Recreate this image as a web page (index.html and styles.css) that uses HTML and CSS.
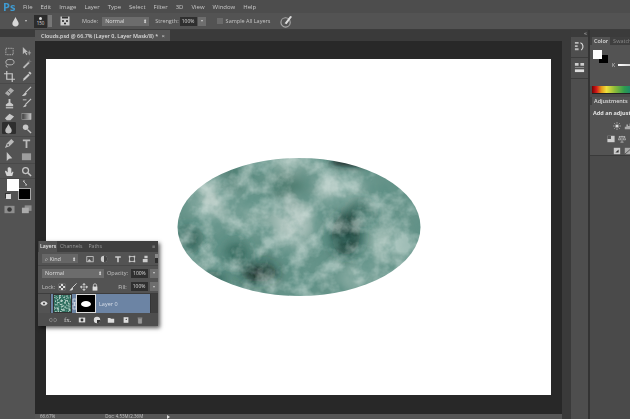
FILE: index.html
```html
<!DOCTYPE html>
<html lang="en">
<head>
<meta charset="utf-8">
<title>Clouds.psd</title>
<link rel="stylesheet" href="styles.css">
</head>
<body>
<div class="app">
  <header class="menubar">
    <span class="logo">Ps</span>
    <nav class="menu"><span>File</span><span>Edit</span><span>Image</span><span>Layer</span><span>Type</span><span>Select</span><span>Filter</span><span>3D</span><span>View</span><span>Window</span><span>Help</span></nav>
  </header>
  <div class="options">
    <svg class="opt-drop" viewBox="0 0 10 12"><path d="M5 1C4 4 1.500 6 1.500 8a3.500 3.500 0 0 0 7 0C8.500 6 6 4 5 1z" fill="#d8d8d8"/></svg>
    <i class="caret opt-caret"></i>
    <div class="brush-size"><b></b><span>150</span></div>
    <div class="brush-arrow"></div>
    <svg class="opt-panel" viewBox="0 0 10 10"><rect x="0.500" y="0.500" width="9" height="9" fill="#ccc"/><rect x="2" y="0.500" width="6" height="2" fill="#333"/><circle cx="3" cy="5" r="1" fill="#222"/><circle cx="7" cy="5" r="1" fill="#222"/><circle cx="5" cy="7.500" r="1" fill="#222"/></svg>
    <span class="lbl lbl-mode">Mode:</span>
    <div class="select sel-mode"><span>Normal</span><em>⬍</em></div>
    <span class="lbl lbl-strength">Strength:</span>
    <div class="field">100%</div>
    <div class="stepper"><i class="caret"></i></div>
    <div class="check"></div>
    <span class="lbl lbl-sample">Sample All Layers</span>
    <svg class="opt-pressure" viewBox="0 0 14 14"><circle cx="6" cy="8" r="5" fill="none" stroke="#aaa" stroke-width="1.200"/><path d="M5 9l6-8 2 1-6 8z" fill="#ddd"/></svg>
  </div>
  <div class="workspace">
    <aside class="tools">
      <div class="tools-head"></div>
      <div class="tool-group">
        <svg viewBox="0 0 12 12"><rect x="2" y="2.500" width="8" height="7" fill="none" stroke="#ccc" stroke-dasharray="1.500 1"/></svg>
        <svg viewBox="0 0 12 12"><path d="M2 1v8l2-2 2 3 1-1-2-2.500h2.500z" fill="#ccc"/><path d="M9 5v5M7 7.500h4" stroke="#ccc" stroke-width=".8"/></svg>
        <svg viewBox="0 0 12 12"><ellipse cx="6.500" cy="4.500" rx="4.500" ry="3" fill="none" stroke="#ccc"/><path d="M3 7c-1 1-1 3 1 3" fill="none" stroke="#ccc"/></svg>
        <svg viewBox="0 0 12 12"><path d="M2 10l6-6 1.500 1.500-6 6z" fill="#ccc"/><path d="M9 1l1 2 2 .5-2 1-1 2-.5-2-2-1 2-.5z" fill="#777"/></svg>
        <svg viewBox="0 0 12 12"><path d="M3 0v9h9M0 3h9v9" fill="none" stroke="#ddd" stroke-width="1.300"/></svg>
        <svg viewBox="0 0 12 12"><path d="M2 11l1-3 5-5 1.500 1.500-5 5z" fill="#ddd"/><path d="M8 2l1.500-1.500 2 2L10 4z" fill="#ddd"/></svg>
      </div>
      <div class="tool-group">
        <svg viewBox="0 0 12 12"><path d="M1 8l6-6 4 3-6 6z" fill="#bbb"/><path d="M4 5l3 3" stroke="#555"/></svg>
        <svg viewBox="0 0 12 12"><path d="M11 1L5 7" stroke="#ddd" stroke-width="1.200"/><path d="M5 6.500L1 11c2 0 5 0 5-3z" fill="#ddd"/></svg>
        <svg viewBox="0 0 12 12"><path d="M5 1h2v4l3 2v2H2V7l3-2z" fill="#ddd"/><rect x="2" y="10" width="8" height="1.300" fill="#ddd"/></svg>
        <svg viewBox="0 0 12 12"><path d="M11 1L5 7" stroke="#ddd" stroke-width="1.200"/><path d="M5 6.500L2 10c2 0 4 0 4-2z" fill="#ddd"/><path d="M2 2h4" stroke="#ddd"/></svg>
        <svg viewBox="0 0 12 12"><path d="M1 8l5-5 5 3-4 4H3z" fill="#ddd"/></svg>
        <svg viewBox="0 0 12 12"><defs><linearGradient id="g"><stop offset="0" stop-color="#333"/><stop offset="1" stop-color="#ddd"/></linearGradient></defs><rect x="1" y="2.500" width="10" height="7" fill="url(#g)" stroke="#bbb" stroke-width=".6"/></svg>
        <span class="tool-active"><svg viewBox="0 0 12 12"><path d="M6 1C5 4 2.500 5.500 2.500 8a3.500 3.500 0 0 0 7 0C9.500 5.500 7 4 6 1z" fill="#d8d8d8"/></svg></span>
        <svg viewBox="0 0 12 12"><circle cx="5" cy="4.500" r="3" fill="#ddd"/><path d="M7 7l4 4" stroke="#ddd" stroke-width="1.500"/></svg>
      </div>
      <div class="tool-group">
        <svg viewBox="0 0 12 12"><path d="M1 11l2-5 5-5 3 3-5 5z" fill="#ccc"/><circle cx="4.500" cy="7.500" r="1" fill="#555"/></svg>
        <svg viewBox="0 0 12 12"><path d="M2 1.500h8v2H7v7.500H5V3.500H2z" fill="#ccc"/></svg>
        <svg viewBox="0 0 12 12"><path d="M3 1v10l2.500-2.500L9 8z" fill="#ddd"/></svg>
        <svg viewBox="0 0 12 12"><rect x="1" y="2.500" width="10" height="7.500" fill="#aaa"/></svg>
      </div>
      <div class="tool-group">
        <svg viewBox="0 0 12 12"><path d="M3 11L1 6l1-1 2 2V2h1v3V1h1v4V1.500h1V5V2.500h1V8l1.500-2 .8.500L9 11z" fill="#eee"/></svg>
        <svg viewBox="0 0 12 12"><circle cx="5" cy="5" r="3.200" fill="none" stroke="#ddd" stroke-width="1.400"/><path d="M7.500 7.500L11 11" stroke="#ddd" stroke-width="1.600"/></svg>
      </div>
      <div class="swatches">
        <div class="sw-bg"></div>
        <div class="sw-fg"></div>
        <svg class="sw-swap" viewBox="0 0 6 6"><path d="M1 1l4 4M1 1h2M5 5H3" stroke="#bbb" fill="none"/></svg>
        <div class="sw-mini"></div>
      </div>
      <div class="tool-group tool-modes">
        <svg viewBox="0 0 12 12"><rect x="0.500" y="2" width="11" height="8" fill="#999"/><circle cx="6" cy="6" r="2.500" fill="#333"/></svg>
        <svg viewBox="0 0 12 12"><rect x="4" y="1.500" width="7.500" height="6" fill="#999"/><rect x="1" y="4" width="7.500" height="6" fill="#bbb"/></svg>
      </div>
    </aside>
    <main class="doc">
      <div class="tabbar">
        <div class="tab"><span>Clouds.psd @ 66.7% (Layer 0, Layer Mask/8) *</span><em>×</em></div>
      </div>
      <div class="pasteboard">
        <div class="canvas"></div>
        <svg class="clouds" viewBox="0 0 250 146" aria-hidden="true">
          <defs>
            <filter id="soft" x="-40%" y="-40%" width="180%" height="180%"><feGaussianBlur stdDeviation="9"/></filter>
            <filter id="softer" x="-40%" y="-40%" width="180%" height="180%"><feGaussianBlur stdDeviation="6.500"/></filter>
            <filter id="rim" x="-40%" y="-100%" width="180%" height="300%"><feGaussianBlur stdDeviation="3"/></filter>
            <filter id="edge"><feGaussianBlur stdDeviation=".7"/></filter>
            <filter id="noise" x="0" y="0" width="100%" height="100%">
              <feTurbulence type="fractalNoise" baseFrequency=".05" numOctaves="4" seed="11"/>
              <feColorMatrix values="0 0 0 0 .78  0 0 0 0 .86  0 0 0 0 .83  2.800 0 0 0 -1.150"/>
            </filter>
            <filter id="noise2" x="0" y="0" width="100%" height="100%">
              <feTurbulence type="fractalNoise" baseFrequency=".05" numOctaves="4" seed="29"/>
              <feColorMatrix values="0 0 0 0 .1  0 0 0 0 .27  0 0 0 0 .23  2.800 0 0 0 -1.150"/>
            </filter>
            <mask id="oval"><ellipse cx="125" cy="73" rx="121.500" ry="69" fill="#fff" filter="url(#edge)"/></mask>
          </defs>
          <g mask="url(#oval)">
            <rect width="250" height="146" fill="#659389"/>
            <g filter="url(#soft)">
              <ellipse cx="38" cy="46" rx="15" ry="20" fill="#c0d0ca"/>
              <ellipse cx="119" cy="69" rx="20" ry="22" fill="#bccdc8"/>
              <ellipse cx="164" cy="33" rx="22" ry="14" fill="#b8ccc6"/>
              <ellipse cx="210" cy="89" rx="13" ry="16" fill="#bcd0c9"/>
              <ellipse cx="184" cy="123" rx="16" ry="10" fill="#a9c3bb"/>
              <ellipse cx="114" cy="11" rx="22" ry="7" fill="#a9c2ba"/>
              <ellipse cx="80" cy="60" rx="18" ry="12" fill="#8fb0a7"/>
              <ellipse cx="115" cy="33" rx="20" ry="12" fill="#3e7265"/>
              <ellipse cx="60" cy="20" rx="18" ry="10" fill="#44776b"/>
            </g>
            <g filter="url(#softer)">
              <ellipse cx="172" cy="81" rx="14" ry="20" fill="#11302a"/>
              <ellipse cx="85" cy="118" rx="18" ry="10" fill="#0a201b"/>
              <ellipse cx="62" cy="100" rx="11" ry="11" fill="#2c5f53"/>
              <ellipse cx="14" cy="85" rx="10" ry="11" fill="#1f4a40"/>
              <ellipse cx="40" cy="126" rx="11" ry="5" fill="#123a31"/>
              <ellipse cx="186" cy="58" rx="11" ry="8" fill="#2a554b"/>
            </g>
            <rect width="250" height="146" filter="url(#noise2)" opacity=".5"/>
            <rect width="250" height="146" filter="url(#noise)" opacity=".45"/>
            <ellipse cx="178" cy="8" rx="22" ry="4" fill="#111d1a" filter="url(#rim)"/>
          </g>
        </svg>
      </div>
      <div class="statusbar"><span>66.67%</span><span class="st-doc">Doc: 4.53M/2.36M</span><i class="st-arrow"></i></div>
      <section class="layers">
        <div class="ly-tabs"><span class="ly-tab">Layers</span><span>Channels</span><span>Paths</span><em>≡</em></div>
        <div class="ly-row ly-kind">
          <div class="select sel-kind"><span>⌕ Kind</span><em>⬍</em></div>
          <svg viewBox="0 0 10 10"><rect x="1" y="2" width="8" height="6.500" fill="none" stroke="#ccc"/><path d="M2 8l2-3 3 3" fill="#ccc"/></svg>
          <svg viewBox="0 0 10 10"><circle cx="5" cy="5" r="4" fill="#ccc"/><path d="M5 1a4 4 0 0 1 0 8z" fill="#444"/></svg>
          <svg viewBox="0 0 10 10"><path d="M1.500 1.500h7v2H6v5.500H4V3.500H1.500z" fill="#ccc"/></svg>
          <svg viewBox="0 0 10 10"><rect x="2" y="2" width="6" height="6" fill="none" stroke="#ccc"/><path d="M1 1h2v2H1zM7 1h2v2H7zM1 7h2v2H1zM7 7h2v2H7z" fill="#ccc"/></svg>
          <svg viewBox="0 0 10 10"><path d="M3 1h4v3H3zM1 5h6v4H1z" fill="#ccc"/></svg>
          <div class="ly-toggle"></div>
        </div>
        <div class="ly-row ly-blend">
          <div class="select sel-blend"><span>Normal</span><em>⬍</em></div>
          <span class="lbl">Opacity:</span><div class="field">100%</div><div class="stepper"><i class="caret"></i></div>
        </div>
        <div class="ly-row ly-lock">
          <span class="lbl">Lock:</span>
          <svg viewBox="0 0 10 10"><rect x="1" y="1" width="8" height="8" fill="#ddd"/><path d="M1 1h2.700v2.700H1zM6.300 1H9v2.700H6.300zM3.700 3.700h2.600v2.600H3.700zM1 6.300h2.700V9H1zM6.300 6.300H9V9H6.300z" fill="#555"/></svg>
          <svg viewBox="0 0 10 10"><path d="M9.500.500L4 6" stroke="#ddd" stroke-width="1.100"/><path d="M4 5.500L.500 9.500c2 0 4.500 0 4.500-3z" fill="#ddd"/></svg>
          <svg viewBox="0 0 10 10"><path d="M5 .500v9M.500 5h9M5 .500L3.500 2h3zM5 9.500L3.500 8h3zM.500 5L2 3.500v3zM9.500 5L8 3.500v3z" stroke="#ddd" stroke-width=".7" fill="#ddd"/></svg>
          <svg viewBox="0 0 10 10"><path d="M3 5V3a2 2 0 0 1 4 0v2" fill="none" stroke="#ddd"/><rect x="2" y="4.500" width="6" height="5" fill="#ddd"/></svg>
          <span class="lbl ly-fill">Fill:</span><div class="field">100%</div><div class="stepper"><i class="caret"></i></div>
        </div>
        <div class="ly-list">
          <div class="ly-eye"><svg viewBox="0 0 10 6"><path d="M.500 3C2 .800 3.500 .300 5 .300S8 .800 9.500 3C8 5.200 6.500 5.700 5 5.700S2 5.200 .500 3z" fill="#ddd"/><circle cx="5" cy="3" r="1.400" fill="#444"/></svg></div>
          <div class="ly-item">
            <svg class="ly-thumb" viewBox="0 0 17 17"><defs><filter id="thumb" x="0" y="0" width="100%" height="100%"><feTurbulence type="fractalNoise" baseFrequency=".55" numOctaves="2" seed="4"/><feColorMatrix values="0 0 0 0 .75 0 0 0 0 .87 0 0 0 0 .82 3.500 0 0 0 -1.500"/></filter></defs><rect width="17" height="17" fill="#2f6f5f"/><rect width="17" height="17" filter="url(#thumb)" opacity=".75"/></svg>
            <svg class="ly-link" viewBox="0 0 5 12"><path d="M1 1h3v4H1zM1 7h3v4H1zM2.500 4v4" fill="none" stroke="#d7dde6" stroke-width=".8"/></svg>
            <div class="ly-mask"><b></b></div>
            <span>Layer 0</span>
          </div>
          <div class="ly-scroll"></div>
        </div>
        <div class="ly-foot">
          <svg viewBox="0 0 10 10"><path d="M4 3H2.500a2 2 0 0 0 0 4H4M6 3h1.500a2 2 0 0 1 0 4H6M3 5h4" fill="none" stroke="#999" stroke-width=".8"/></svg>
          <span class="ly-fx">fx.</span>
          <svg viewBox="0 0 10 10"><rect x="1" y="2" width="8" height="6" fill="#ddd"/><circle cx="5" cy="5" r="1.800" fill="#333"/></svg>
          <svg viewBox="0 0 10 10"><circle cx="5" cy="5" r="4" fill="#ddd"/><path d="M5 5h4a4 4 0 0 1-4 4z" fill="#333"/></svg>
          <svg viewBox="0 0 10 10"><path d="M1 2.500h3l1 1h4V8.500H1z" fill="#ddd"/></svg>
          <svg viewBox="0 0 10 10"><path d="M2 1.500h6v7H2z" fill="#ddd"/><path d="M4 5l2-2v2z" fill="#333"/></svg>
          <svg viewBox="0 0 10 10"><path d="M2 2.500h6M3 3v6h4V3" fill="#999" stroke="#999"/></svg>
        </div>
      </section>
    </main>
    <div class="gutter"></div>
    <aside class="dock">
      <div class="dock-head"><em>«</em></div>
      <div class="dock-btn"><svg viewBox="0 0 12 12"><path d="M1 1h4v2H1zM1 4.500h3v2H1zM1 8h4v2H1z" fill="#bbb"/><path d="M7 2c3 1 4 5 1 8" fill="none" stroke="#ddd" stroke-width="1.200"/></svg></div>
      <div class="dock-btn"><svg viewBox="0 0 12 12"><path d="M1 1h4v3H1zM7 1h4v3H7z" fill="#ccc"/><path d="M1 5.500h10v1H1z" fill="#888"/><path d="M1 8h10v3H1z" fill="#ddd"/></svg></div>
    </aside>
    <aside class="panels">
      <div class="panel-head"></div>
      <div class="pn-tabs"><span class="pn-tab">Color</span><span>Swatches</span></div>
      <div class="pn-color">
        <div class="pc-swatches"><div class="pc-bg"></div><div class="pc-fg"></div></div>
        <div class="pc-slider"><span>K</span><div class="pc-track"></div></div>
      </div>
      <div class="spectrum"></div>
      <div class="pn-tabs pn-tabs2"><span class="pn-tab">Adjustments</span></div>
      <div class="pn-adjust">
        <p>Add an adjustment</p>
        <div class="adj-row adj-r1">
          <svg viewBox="0 0 10 10"><circle cx="5" cy="5" r="2" fill="#ddd"/><path d="M5 0v2M5 8v2M0 5h2M8 5h2M1.500 1.500L3 3M7 7l1.500 1.500M8.500 1.500L7 3M3 7L1.500 8.500" stroke="#ddd" stroke-width=".7"/></svg>
          <svg viewBox="0 0 10 10"><path d="M1 9V6h2V3h2v2h2V2h2v7z" fill="#aaa"/></svg>
        </div>
        <div class="adj-row adj-r2">
          <svg viewBox="0 0 10 10"><rect x="0.500" y="1" width="9" height="8" fill="#ccc"/><rect x="0.500" y="1" width="4.500" height="4" fill="#555"/></svg>
          <svg viewBox="0 0 10 10"><path d="M5 1v8M3 9h4M1 2h8M2 2L.500 6h3zM8 2L6.500 6h3z" fill="none" stroke="#ccc" stroke-width=".8"/></svg>
        </div>
        <div class="adj-row adj-r3">
          <svg viewBox="0 0 10 10"><rect x="1" y="1" width="8" height="8" fill="#ccc"/><path d="M3 7l4-4v4z" fill="#333"/></svg>
          <svg viewBox="0 0 10 10"><rect x="1" y="1" width="9" height="8" fill="#aaa"/><path d="M1 9l9-8" stroke="#444"/></svg>
        </div>
      </div>
    </aside>
  </div>
</div>
</body>
</html>
```
FILE: styles.css
```css
* { box-sizing: border-box; }
html, body { margin: 0; padding: 0; }
body { width: 630px; height: 419px; overflow: hidden; background: #535353; font-family: "Open Sans", "Liberation Sans", sans-serif; color: #cfcfcf; }
em { font-style: normal; }
svg { display: block; }

.app { width: 630px; height: 419px; display: flex; flex-direction: column; filter: blur(.35px); }

.menubar { height: 13px; flex: none; display: flex; align-items: center; background: #4d4d4d; }
.logo { width: 23px; padding-left: 3px; font-size: 11px; font-weight: 700; color: #3f9ad0; line-height: 13px; }
.menu { display: flex; gap: 8px; font-size: 6px; color: #c8c8c8; }

.options { height: 17px; flex: none; display: flex; align-items: center; background: #535353; border-bottom: 1px solid #3c3c3c; font-size: 5.500px; }
.lbl { font-size: 5.500px; color: #c4c4c4; white-space: nowrap; }
.caret { display: block; width: 0; height: 0; border-left: 1.500px solid transparent; border-right: 1.500px solid transparent; border-top: 2px solid #ccc; }
.opt-drop { width: 9px; height: 11px; margin-left: 11px; }
.opt-caret { margin-left: 5px; }
.brush-size { width: 13px; height: 13px; margin-left: 7px; background: #2c2c2c; display: flex; flex-direction: column; align-items: center; font-size: 4.500px; color: #ddd; line-height: 6px; padding-top: 2px; }
.brush-size b { width: 3px; height: 3px; border-radius: 50%; background: #ddd; }
.brush-arrow { width: 4px; height: 12px; margin-left: 1px; background: #777; }
.opt-panel { width: 10px; height: 10px; margin-left: 8px; }
.lbl-mode { margin-left: 12px; }
.select { height: 9px; display: flex; align-items: center; justify-content: space-between; padding: 0 2px 0 3px; background: #6c6c6c; font-size: 5.500px; color: #ddd; }
.select em { font-size: 4.500px; }
.sel-mode { width: 47px; margin-left: 4px; }
.lbl-strength { margin-left: 6px; }
.field { width: 17px; height: 9px; margin-left: 1px; background: #2f2f2f; color: #ddd; font-size: 5px; line-height: 9px; text-align: center; flex: none; }
.stepper { width: 8px; height: 9px; margin-left: 1px; background: #6e6e6e; display: flex; align-items: center; justify-content: center; flex: none; }
.check { width: 6px; height: 6px; margin-left: 11px; background: #6a6a6a; }
.lbl-sample { margin-left: 3px; }
.opt-pressure { width: 13px; height: 13px; margin-left: 10px; }

.workspace { flex: 1; min-height: 0; display: flex; }

.tools { width: 35px; flex: none; background: #535353; display: flex; flex-direction: column; }
.tools-head { height: 7px; background: #3b3b3b; margin-bottom: 7px; }
.tool-group { display: grid; grid-template-columns: 11px 11px; column-gap: 6px; row-gap: 1.500px; padding: 1.500px 0 1.500px 3.500px; border-bottom: 1px solid #494949; }
.tool-group svg { width: 11px; height: 11px; opacity: .85; }
.tool-active { display: block; width: 14px; height: 12px; margin: -1px 0 0 -2px; padding-left: 1.500px; padding-top: .5px; background: #2e2e2e; border-radius: 1px; }
.swatches { position: relative; height: 24px; flex: none; }
.sw-fg { position: absolute; left: 7px; top: 0; width: 12px; height: 12px; background: #fff; }
.sw-bg { position: absolute; left: 18px; top: 9px; width: 13px; height: 12px; background: #000; border: 1px solid #aaa; }
.sw-swap { position: absolute; left: 22px; top: 1px; width: 6px; height: 6px; }
.sw-mini { position: absolute; left: 6px; top: 15px; width: 5px; height: 5px; background: #ddd; box-shadow: -1px -1px 0 #333; }
.tool-modes { border: 0; padding-top: 1px; }

.doc { position: relative; width: 527px; flex: none; display: flex; flex-direction: column; }
.tabbar { height: 11px; flex: none; background: #3a3a3a; }
.tab { width: 135px; height: 11px; padding: 0 3px 0 6px; display: flex; align-items: center; justify-content: space-between; background: #555; font-size: 5.400px; font-weight: 600; color: #dedede; white-space: nowrap; }
.tab em { color: #bbb; font-size: 6px; margin-right: 2px; }
.pasteboard { position: relative; flex: 1; min-height: 0; background: #282828; padding: 18px 0 0 11px; }
.canvas { width: 505px; height: 336px; background: #fff; }
.clouds { position: absolute; left: 139px; top: 113px; width: 250px; height: 146px; }
.statusbar { height: 5px; flex: none; background: #565656; display: flex; align-items: center; padding-left: 5px; font-size: 4.500px; color: #c4c4c4; line-height: 5px; }
.st-doc { margin-left: 50px; }
.st-arrow { margin-left: 24px; width: 0; height: 0; border-top: 2px solid transparent; border-bottom: 2px solid transparent; border-left: 3px solid #ddd; }

.layers { position: absolute; left: 3px; top: 211px; width: 120px; height: 85px; background: #535353; box-shadow: 2px 2px 4px rgba(0, 0, 0, .65); display: flex; flex-direction: column; }
.ly-tabs { height: 11px; flex: none; display: flex; align-items: stretch; background: #3f3f3f; font-size: 5.200px; color: #9a9a9a; line-height: 11px; }
.ly-tabs span { padding: 0 3px; }
.ly-tabs .ly-tab { width: 18px; padding: 0 1px; margin-left: 1px; background: #535353; color: #e4e4e4; font-weight: 600; }
.ly-tabs em { margin-left: auto; padding-right: 3px; }
.ly-row { flex: none; display: flex; align-items: center; }
.ly-row > svg { width: 8px; height: 8px; flex: none; }
.ly-kind { height: 14px; padding-left: 4px; gap: 6px; border-bottom: 1px solid #474747; }
.sel-kind { width: 43px; margin-right: 2px; background: #666; }
.ly-toggle { width: 4px; height: 9px; margin-left: -1px; background: #2e2e2e; border-top: 4px solid #888; }
.ly-blend { height: 14px; padding-left: 4px; }
.sel-blend { width: 62px; margin-right: 3px; }
.ly-blend .field, .ly-lock .field { margin-left: 3px; }
.ly-blend .stepper { margin-left: 2px; }
.ly-lock { height: 14px; padding-left: 4px; gap: 3px; border-bottom: 1px solid #3d3d3d; }
.ly-lock .field { margin-left: 1px; }
.ly-lock .stepper { margin-left: -1px; }
.ly-fill { margin-left: 16px; }
.ly-list { height: 19px; flex: none; display: flex; }
.ly-eye { width: 13px; display: flex; align-items: center; justify-content: center; border-right: 1px solid #3d3d3d; }
.ly-eye svg { width: 8px; height: 5px; }
.ly-item { width: 99px; background: #6c84a4; display: flex; align-items: center; padding-left: 3px; font-size: 5.500px; color: #d6dde8; }
.ly-thumb { width: 17px; height: 17px; outline: 1px solid #333; }
.ly-link { width: 5px; height: 12px; margin-left: 0.500px; }
.ly-mask { width: 18px; height: 17px; margin: 0 4px 0 0.500px; background: #000; outline: 1px solid #ddd; display: flex; align-items: center; justify-content: center; }
.ly-mask b { width: 10px; height: 6px; background: #fff; border-radius: 50%; }
.ly-scroll { flex: 1; background: #3f3f3f; border-left: 1px solid #353535; }
.ly-foot { flex: 1; display: flex; align-items: center; justify-content: flex-end; gap: 6.500px; padding-right: 14px; background: #4e4e4e; }
.ly-foot svg { width: 8px; height: 8px; }
.ly-fx { font-family: "Liberation Serif", serif; font-size: 7px; color: #ccc; }

.gutter { width: 8px; flex: none; background: #3a3a3a; }

.dock { width: 20px; flex: none; background: #4e4e4e; border-left: 1px solid #3a3a3a; border-right: 2px solid #333; }
.dock-head { height: 7px; background: #3b3b3b; font-size: 6px; line-height: 6px; text-align: right; padding-right: 1px; color: #bbb; }
.dock-btn { height: 21px; padding: 4px 0 0 3px; border-bottom: 1px solid #3c3c3c; }
.dock-btn svg { width: 11px; height: 11px; }

.panels { flex: 1; min-width: 0; background: #4a4a4a; overflow: hidden; }
.panel-head { height: 7px; background: #3b3b3b; }
.pn-tabs { height: 8px; display: flex; background: #3f3f3f; font-size: 5.500px; line-height: 8px; color: #8a8a8a; white-space: nowrap; }
.pn-tab { padding: 0 2px; margin-left: 2px; margin-right: 3px; background: #535353; color: #dedede; font-weight: 600; }
.pn-color { height: 41px; background: #535353; padding: 5px 0 0 3px; display: flex; }
.pc-swatches { position: relative; width: 15px; height: 14px; flex: none; }
.pc-fg { position: absolute; left: 0; top: 0; width: 9px; height: 9px; background: #fff; }
.pc-bg { position: absolute; left: 6px; top: 5px; width: 9px; height: 8px; background: #000; }
.pc-slider { display: flex; align-items: center; height: 11px; margin-top: 9px; margin-left: 4px; font-size: 5px; gap: 2px; }
.pc-track { width: 20px; height: 2px; margin-left: 1px; background: linear-gradient(90deg, #fff, #bbb); }
.spectrum { height: 8px; margin-left: 2px; background: linear-gradient(90deg, #7a0000 0, #d41a1a 12%, #e49a1b 25%, #eee03c 38%, #8dbb3a 60%, #2f9c4e 85%, #1e8a6a 100%); border-bottom: 1px solid #222; }
.pn-tabs2 { margin-top: 3px; height: 8px; }
.pn-adjust { height: 51px; background: #535353; border-bottom: 1px solid #3a3a3a; padding-top: 4px; }
.pn-adjust p { margin: 0 0 0 3px; font-size: 5.500px; font-weight: 700; color: #e2e2e2; line-height: 8px; white-space: nowrap; }
.adj-row { display: flex; gap: 3px; margin-top: 5px; }
.adj-row svg { width: 8px; height: 8px; flex: none; }
.adj-r1 { padding-left: 23px; }
.adj-r2 { padding-left: 17px; }
.adj-r3 { padding-left: 23px; margin-top: 4px; }
```
